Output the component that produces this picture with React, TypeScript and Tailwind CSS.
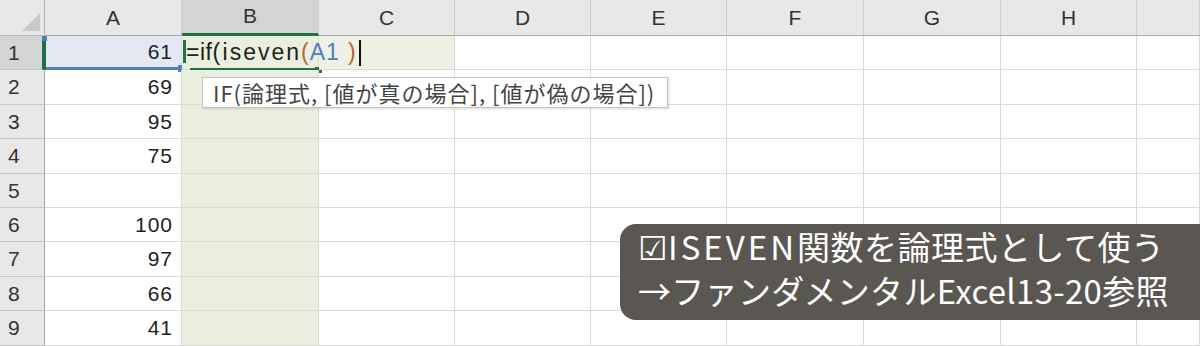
import React from "react";

const cols = ["A", "B", "C", "D", "E", "F", "G", "H", ""];
const values: (string | null)[] = ["61", "69", "95", "75", null, "100", "97", "66", "41"];

const font = { fontFamily: '"Liberation Sans", "Noto Sans CJK JP", sans-serif' };
const cjk = { fontFamily: '"Noto Sans CJK JP", "Noto Sans", sans-serif' };

export default function App() {
  return (
    <div className="relative w-[1200px] h-[346px] overflow-hidden bg-white" style={font}>
      <div className="grid grid-cols-[45px_137px_137px_136px_136px_136px_137px_137px_136px_1fr] grid-rows-[36px_repeat(9,34.4px)]">
        {/* corner */}
        <div className="relative bg-[#e8e8e8] border-r border-b border-[#b8b8b8]">
          <div className="absolute right-[4px] bottom-[4px] w-0 h-0 border-l-[18px] border-l-transparent border-b-[18px] border-b-[#c9c9c9]" />
        </div>
        {cols.map((c, i) => (
          <div
            key={"h" + i}
            className={
              "flex items-end justify-center pb-[2px] text-[21px] text-[#333] border-r border-[#cfcfcf] " +
              (c === "B"
                ? "bg-[#d4d4d4] border-b-[3px] border-b-[#217346]"
                : "bg-[#e8e8e8] border-b border-b-[#a8a8a8]")
            }
          >
            {c}
          </div>
        ))}
        {values.map((v, r) => (
          <React.Fragment key={"r" + r}>
            <div
              className={
                "flex items-center pl-[8px] text-[21px] text-[#333] border-b border-[#c6c6c6] " +
                (r === 0
                  ? "bg-[#d4d4d4] border-r-[3px] border-r-[#217346]"
                  : "bg-[#e8e8e8] border-r border-r-[#a8a8a8]")
              }
            >
              {r + 1}
            </div>
            {cols.map((c, ci) => {
              let cls = "relative flex items-center border-r border-b border-[#dadada] ";
              if (c === "A") {
                cls += "justify-end pr-[8px] text-[21px] text-[#222] tracking-[1px] ";
                if (r === 0) cls += "bg-[#e3e8f2] border-b-[3px] border-b-[#4f7fbd] ";
              }
              if (c === "B") cls += "bg-[#ebefdf] ";
              if (c === "C" && r === 0) cls += "bg-[#eef1e4] ";
              return (
                <div key={"c" + r + "-" + ci} className={cls}>
                  {c === "A" && v}
                  {c === "A" && r === 0 && (
                    <>
                      <div className="absolute left-[-2px] top-0 bottom-[-3px] w-[3px] bg-[#1f6b4c]" />
                      <div className="absolute left-[-3px] top-0 w-[5px] h-[5px] bg-[#4f7fbd]" />
                      <div className="absolute right-[-4px] bottom-[-5px] w-[7px] h-[7px] bg-[#4f7fbd]" />
                    </>
                  )}
                  {c === "B" && r === 0 && (
                    <>
                      <div className="absolute left-[1px] top-[4px] bottom-[6px] w-[3px] bg-[#217346]" />
                      <div className="absolute left-[8px] right-[0px] bottom-[-2px] h-[3px] bg-[#217346]" />
                      <div className="absolute right-[-4px] bottom-[-4px] w-[7px] h-[6px] bg-[#217346]" />
                      <div
                        className="absolute left-[4px] top-0 bottom-0 flex items-center whitespace-nowrap text-[23px] text-[#222] z-10"
                        style={font}
                      >
                        <span className="tracking-[0.5px]">=if(</span>
                        <span className="tracking-[2px] ml-[2px]">iseven</span>
                        <span className="text-[#b5652f]">(</span>
                        <span className="text-[#4f7fbd] tracking-[1px] ml-[1px]">A1</span>
                        <span className="text-[#b5652f] ml-[8px]">)</span>
                        <span className="ml-[3px] w-[2px] h-[26px] bg-[#111]" />
                      </div>
                    </>
                  )}
                </div>
              );
            })}
          </React.Fragment>
        ))}
      </div>

      {/* tooltip */}
      <div
        className="absolute left-[202px] top-[77px] h-[31px] w-[466px] flex items-center pl-[10px] bg-white border border-[#c4c4c4] shadow-[1px_1px_2px_rgba(0,0,0,0.15)] text-[22px] tracking-[1px] text-[#444] whitespace-nowrap"
        style={cjk}
      >
        IF(論理式, [値が真の場合], [値が偽の場合])
      </div>

      {/* caption */}
      <div
        className="absolute left-[620px] top-[224px] w-[600px] h-[96px] rounded-[16px] bg-[#5a5652] pl-[18px] text-white text-[33px] leading-[44px] whitespace-nowrap"
        style={cjk}
      >
        <div>
          ☑<span className="tracking-[3px]">ISEVEN</span>
          <span className="tracking-[0.5px]">関数を論理式として使う</span>
        </div>
        <div className="tracking-[0.3px]">→ファンダメンタルExcel13-20参照</div>
      </div>
    </div>
  );
}
